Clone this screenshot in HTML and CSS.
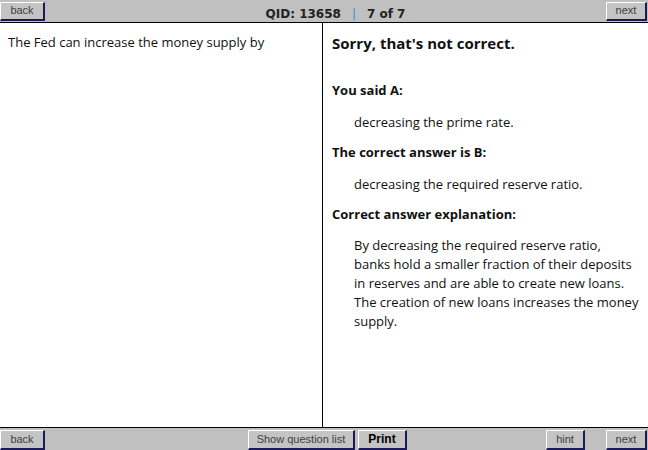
FILE: index.html
```html
<!DOCTYPE html>
<html>
<head>
<meta charset="utf-8">
<link rel="stylesheet" href="styles.css">
</head>
<body>
<div class="page">
  <div class="bar top">
    <button class="btn w45">back</button>
    <div class="title"><span>QID: 13658</span><span class="sep">|</span><span>7 of 7</span></div>
    <button class="btn w41 edge">next</button>
  </div>
  <div class="main">
    <div class="left">
      <p class="question">The Fed can increase the money supply by</p>
    </div>
    <div class="right">
      <h1 class="verdict">Sorry, that's not correct.</h1>
      <h2 class="label first">You said A:</h2>
      <p class="answer">decreasing the prime rate.</p>
      <h2 class="label">The correct answer is B:</h2>
      <p class="answer">decreasing the required reserve ratio.</p>
      <h2 class="label">Correct answer explanation:</h2>
      <p class="answer explain">By decreasing the required reserve ratio,<br>banks hold a smaller fraction of their deposits<br>in reserves and are able to create new loans.<br>The creation of new loans increases the money<br>supply.</p>
    </div>
  </div>
  <div class="bar bottom">
    <button class="btn w45">back</button>
    <div class="center-btns">
      <button class="btn wide">Show question list</button>
      <button class="btn print">Print</button>
    </div>
    <div class="right-btns">
      <button class="btn w39">hint</button>
      <button class="btn w41">next</button>
    </div>
  </div>
</div>
</body>
</html>
```

FILE: styles.css
```css
html, body {
  margin: 0;
  padding: 0;
  background: #ffffff;
}
.page {
  width: 648px;
  height: 450px;
  display: flex;
  flex-direction: column;
  font-family: "Open Sans", "Noto Sans", sans-serif;
  color: #111;
  overflow: hidden;
}
.bar {
  background: #c0c0c0;
  display: flex;
  align-items: center;
  justify-content: space-between;
  box-sizing: border-box;
  flex: none;
}
.bar.top {
  border-bottom: 1px solid #000;
  height: 23px;
  position: relative;
}
.bar.bottom {
  border-top: 1px solid #000;
  height: 23px;
  position: relative;
  align-items: flex-start;
  padding-top: 2px;
}
.btn {
  font-family: "Liberation Sans", Arial, sans-serif;
  font-size: 11px;
  color: #404040;
  background: #c4c4c4;
  border-style: solid;
  border-width: 1px 2px 2px 1px;
  border-color: #ffffff #1a1a5a #1a1a5a #ffffff;
  height: 19px;
  padding: 0;
  margin: 0;
  line-height: 15px;
  white-space: nowrap;
  flex: none;
}
.bottom .btn {
  height: 20px;
}
.w45 { width: 45px; }
.w41 { width: 41px; }
.w39 { width: 39px; }
.edge { margin-right: 1px; }
.title {
  position: absolute;
  left: 0;
  right: 0;
  text-align: center;
  font-family: "DejaVu Sans", sans-serif;
  font-weight: bold;
  font-size: 12px;
  color: #222;
  pointer-events: none;
  padding-left: 23px;
  padding-top: 5px;
}
.title .sep {
  color: #3a8fc8;
  font-weight: normal;
  margin: 0 11px;
}
.main {
  flex: 1;
  display: flex;
  min-height: 0;
}
.left {
  width: 323px;
  border-right: 1px solid #000;
  box-sizing: border-box;
  padding: 10px 8px;
}
.right {
  flex: 1;
  padding: 9px 9px;
}
.question {
  margin: 0;
  font-size: 13px;
  line-height: 18px;
}
.verdict {
  margin: 0 0 27px 0;
  font-size: 15px;
  line-height: 22px;
  font-weight: bold;
}
.label {
  margin: 0 0 14px 0;
  font-size: 13px;
  font-weight: bold;
  line-height: 18px;
}
.answer {
  margin: 0 0 12px 22px;
  font-size: 13px;
  line-height: 18px;
}
.explain {
  line-height: 19px;
  margin-top: -1px;
}
.center-btns {
  position: absolute;
  left: 248px;
  top: 2px;
  display: flex;
  gap: 3px;
}
.wide {
  width: 107px;
}
.print {
  width: 49px;
  font-weight: bold;
  color: #000;
  font-size: 12px;
}
.right-btns {
  display: flex;
  gap: 21px;
  margin-right: 1px;
}
```
